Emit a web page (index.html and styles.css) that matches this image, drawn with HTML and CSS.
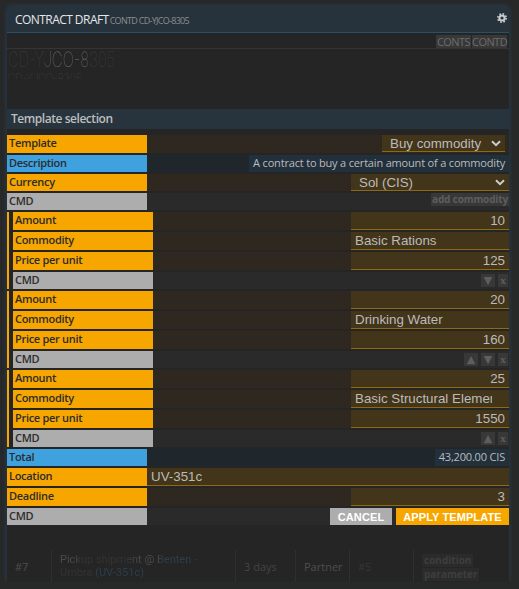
FILE: index.html
```html
<!DOCTYPE html>
<html>
<head>
    <meta charset="UTF-8">
    <meta name="viewport" content="width=device-width, initial-scale=1.0">
    <title>Contract draft</title>
    <link rel="stylesheet" href="styles.css">
</head>
<body>
    <div class="window">
        <div class="title-bar">
            <span class="title">CONTRACT DRAFT</span>
            <span class="subtitle">CONTD CD-YJCO-8305</span>
            <svg class="gear" width="10" height="10" viewBox="0 0 10 10">
                <circle cx="5" cy="5" r="2.6" fill="none" stroke="#ccc" stroke-width="2"></circle>
                <circle cx="5" cy="5" r="4.2" fill="none" stroke="#ccc" stroke-width="1.6" stroke-dasharray="1.7 1.6"></circle>
            </svg>
        </div>
        <div class="cmd-strip">
            <span class="strip-button">CONTS</span>
            <span class="strip-button">CONTD</span>
        </div>
        <div class="hero">
            <div class="hero-big">CD-YJCO-8305</div>
            <div class="hero-small">CD-YJCO-8305</div>
        </div>
        <h2 class="section-title">Template selection</h2>

        <div class="form">
            <div class="row row-input">
                <div class="label label-orange">Template</div>
                <div class="value value-orange">
                    <div class="select select-short">Buy commodity
                        <svg class="chevron" width="10" height="7" viewBox="0 0 10 7"><path d="M1 1.2 5 5.2 9 1.2" fill="none" stroke="#ccc" stroke-width="2"></path></svg>
                    </div>
                </div>
            </div>
            <div class="row row-short">
                <div class="label label-blue">Description</div>
                <div class="value value-blue">
                    <span class="readout">A contract to buy a certain amount of a commodity</span>
                </div>
            </div>
            <div class="row row-short">
                <div class="label label-orange">Currency</div>
                <div class="value value-orange">
                    <div class="select select-wide">Sol (CIS)
                        <svg class="chevron" width="10" height="7" viewBox="0 0 10 7"><path d="M1 1.2 5 5.2 9 1.2" fill="none" stroke="#ccc" stroke-width="2"></path></svg>
                    </div>
                </div>
            </div>
            <div class="row row-short">
                <div class="label label-gray">CMD</div>
                <div class="value value-gray">
                    <span class="small-button add-button">add commodity</span>
                </div>
            </div>

            <div class="commodity">
                <div class="row row-input">
                    <div class="label label-orange">Amount</div>
                    <div class="value value-orange"><input class="field number" value="10"></div>
                </div>
                <div class="row row-input">
                    <div class="label label-orange">Commodity</div>
                    <div class="value value-orange"><input class="field text" value="Basic Rations"></div>
                </div>
                <div class="row row-input">
                    <div class="label label-orange">Price per unit</div>
                    <div class="value value-orange"><input class="field number" value="125"></div>
                </div>
                <div class="row row-short">
                    <div class="label label-gray">CMD</div>
                    <div class="value value-gray value-icons">
                        <span class="small-button icon-button">&#9660;</span>
                        <span class="small-button close-button">x</span>
                    </div>
                </div>
            </div>

            <div class="commodity">
                <div class="row row-input">
                    <div class="label label-orange">Amount</div>
                    <div class="value value-orange"><input class="field number" value="20"></div>
                </div>
                <div class="row row-input">
                    <div class="label label-orange">Commodity</div>
                    <div class="value value-orange"><input class="field text" value="Drinking Water"></div>
                </div>
                <div class="row row-input">
                    <div class="label label-orange">Price per unit</div>
                    <div class="value value-orange"><input class="field number" value="160"></div>
                </div>
                <div class="row row-short">
                    <div class="label label-gray">CMD</div>
                    <div class="value value-gray value-icons">
                        <span class="small-button icon-button">&#9650;</span>
                        <span class="small-button icon-button">&#9660;</span>
                        <span class="small-button close-button">x</span>
                    </div>
                </div>
            </div>

            <div class="commodity">
                <div class="row row-input">
                    <div class="label label-orange">Amount</div>
                    <div class="value value-orange"><input class="field number" value="25"></div>
                </div>
                <div class="row row-input">
                    <div class="label label-orange">Commodity</div>
                    <div class="value value-orange"><input class="field text" value="Basic Structural Elements"></div>
                </div>
                <div class="row row-input">
                    <div class="label label-orange">Price per unit</div>
                    <div class="value value-orange"><input class="field number" value="1550"></div>
                </div>
                <div class="row row-short">
                    <div class="label label-gray">CMD</div>
                    <div class="value value-gray value-icons">
                        <span class="small-button icon-button">&#9650;</span>
                        <span class="small-button close-button">x</span>
                    </div>
                </div>
            </div>

            <div class="row row-short">
                <div class="label label-blue">Total</div>
                <div class="value value-blue">
                    <span class="readout">43,200.00 CIS</span>
                </div>
            </div>
            <div class="row row-input">
                <div class="label label-orange">Location</div>
                <div class="value value-orange"><input class="field text field-full" value="UV-351c"></div>
            </div>
            <div class="row row-input">
                <div class="label label-orange">Deadline</div>
                <div class="value value-orange"><input class="field number" value="3"></div>
            </div>
            <div class="row row-short">
                <div class="label label-gray">CMD</div>
                <div class="value value-gray value-actions">
                    <button class="action cancel">CANCEL</button>
                    <button class="action apply">APPLY TEMPLATE</button>
                </div>
            </div>
        </div>

        <div class="faded-table">
            <div class="cell cell-id">#7</div>
            <div class="cell cell-desc">
                <div class="faded-line line-one">Pickup shipment @ Benten -</div>
                <div class="faded-line line-two">Umbra (UV-351c)</div>
            </div>
            <div class="cell cell-time">3 days</div>
            <div class="cell cell-partner">Partner</div>
            <div class="cell cell-num">#5</div>
            <div class="cell cell-tags">
                <span class="faded-tag">condition</span>
                <span class="faded-tag">parameter</span>
            </div>
        </div>
    </div>
</body>
</html>
```

FILE: styles.css
```css
body {
    margin: 0;
    background-color: #272828;
    font-family: "Open Sans", "Noto Sans", sans-serif;
    font-size: 11px;
}
.window {
    width: 502px;
    height: 576px;
    margin: 6px 0 0 7px;
    background-color: #252525;
    border-radius: 4px 4px 0 0;
    box-shadow: 0 0 5px #26445a;
    overflow: hidden;
    display: flex;
    flex-direction: column;
}
.title-bar {
    position: relative;
    height: 26px;
    padding-left: 8px;
    display: flex;
    align-items: center;
    gap: 1px;
    flex-shrink: 0;
    background-color: #26333c;
    border-bottom: 1px solid #2b4f66;
}
.title {
    font-size: 12px;
    color: #e6e6e6;
    letter-spacing: -0.55px;
}
.subtitle {
    font-size: 9px;
    color: #8c8c8c;
    letter-spacing: -0.7px;
    margin-top: 2px;
}
.gear {
    position: absolute;
    right: 2px;
    top: 7px;
}
.cmd-strip {
    height: 15px;
    display: flex;
    justify-content: flex-end;
    gap: 1px;
    padding-right: 2px;
    flex-shrink: 0;
    border-bottom: 1px solid #353535;
}
.strip-button {
    width: 35px;
    height: 13px;
    margin-top: 2px;
    background-color: #383838;
    color: #6c6c6c;
    font-size: 11px;
    letter-spacing: -0.55px;
    line-height: 13px;
    text-align: center;
}
.hero {
    height: 60px;
    flex-shrink: 0;
}
.hero-big {
    width: 160px;
    padding-left: 1px;
    font-family: "Inter", sans-serif;
    font-weight: 100;
    font-size: 21px;
    line-height: 22px;
    background: linear-gradient(to right, #3e3e3e 0, #3e3e3e 48px, #7a7a7a 56px, #7a7a7a 108px, #3e3e3e 122px);
    -webkit-background-clip: text;
    background-clip: text;
    color: transparent;
    transform: scaleX(0.71);
    transform-origin: left;
}
.hero-small {
    width: 130px;
    height: 15px;
    padding-left: 1px;
    font-family: "Inter", sans-serif;
    font-weight: 100;
    font-size: 14.5px;
    line-height: 15px;
    background: linear-gradient(to bottom, #4c4c4c 0, #4c4c4c 8px, transparent 8px);
    -webkit-background-clip: text;
    background-clip: text;
    color: transparent;
    transform: scaleX(0.71);
    transform-origin: left;
}
.section-title {
    height: 20px;
    margin: 0;
    padding-left: 4px;
    flex-shrink: 0;
    background-color: #27343e;
    color: #bdbdbd;
    font-size: 12px;
    font-weight: 600;
    letter-spacing: -0.45px;
    line-height: 19px;
}
.form {
    margin-top: 6px;
    display: flex;
    flex-direction: column;
    gap: 2px;
    flex-shrink: 0;
}
.commodity {
    display: flex;
    flex-direction: column;
    gap: 2px;
    padding-left: 4px;
    border-left: 2px solid #f7a600;
}
.row {
    display: flex;
}
.row-input {
    height: 18px;
}
.row-short {
    height: 17px;
}
.label {
    width: 140px;
    padding-left: 2px;
    box-sizing: border-box;
    flex-shrink: 0;
    color: #2c2c2c;
    font-weight: 600;
    letter-spacing: -0.3px;
    line-height: 15px;
}
.label-orange {
    background-color: #f7a600;
}
.label-blue {
    background-color: #3fa2de;
}
.label-gray {
    background-color: #adadad;
}
.value {
    flex: 1;
    display: flex;
    justify-content: flex-end;
    align-items: flex-start;
}
.value-orange {
    background-color: #2e2820;
}
.value-blue {
    background-color: #20272c;
}
.value-gray {
    background-color: #2a2a2a;
}
.value-icons {
    gap: 3px;
    padding: 2px 1px 0 0;
}
.value-actions {
    gap: 4px;
}
.select {
    position: relative;
    height: 17px;
    padding-left: 8px;
    box-sizing: border-box;
    background-color: #433519;
    border-bottom: 1px solid #8e6a14;
    color: #bbb;
    font-family: "Liberation Sans", Arial, sans-serif;
    font-size: 13.33px;
    line-height: 17px;
}
.select-short {
    width: 123px;
    margin-right: 4px;
}
.select-wide {
    width: 158px;
}
.chevron {
    position: absolute;
    right: 4px;
    top: 5px;
}
.field {
    width: 158px;
    height: 18px;
    box-sizing: border-box;
    padding: 0 17px 0 4px;
    border: none;
    border-bottom: 1px solid #8e6a14;
    outline: none;
    background-color: #433519;
    color: #bbb;
    font-family: "Liberation Sans", Arial, sans-serif;
    font-size: 13.33px;
}
.field.number {
    padding: 0 4px;
    text-align: right;
}
.field-full {
    width: 100%;
}
.readout {
    height: 17px;
    padding: 0 4px;
    background-color: #22303c;
    color: #bbb;
    font-size: 11px;
    letter-spacing: -0.18px;
    line-height: 15px;
}
.small-button {
    background-color: #383838;
    color: #5e5e5e;
    text-align: center;
}
.add-button {
    height: 13px;
    width: 78px;
    font-size: 10px;
    font-weight: 700;
    letter-spacing: -0.15px;
    line-height: 13px;
}
.icon-button {
    width: 14px;
    height: 13px;
    font-family: "DejaVu Sans", sans-serif;
    font-size: 11px;
    line-height: 13px;
}
.close-button {
    width: 10px;
    height: 13px;
    font-family: "Liberation Serif", serif;
    font-size: 11px;
    font-weight: 700;
    line-height: 13px;
}
.action {
    height: 17px;
    padding: 0;
    border: none;
    color: #fff;
    font-family: "Liberation Sans", Arial, sans-serif;
    font-size: 11px;
    font-weight: 700;
    letter-spacing: 0.1px;
}
.cancel {
    width: 62px;
    background-color: #adadad;
}
.apply {
    width: 113px;
    background-color: #f7a600;
}
.faded-table {
    margin-top: 25px;
    height: 32px;
    display: flex;
    flex-shrink: 0;
    color: #444;
    font-size: 11px;
}
.cell {
    box-sizing: border-box;
    border-right: 1px solid #2c3034;
    padding: 0 8px;
    line-height: 13px;
    display: flex;
    align-items: center;
}
.cell-id {
    width: 45px;
    color: #4e4e4e;
}
.cell-desc {
    width: 184px;
    display: block;
    padding-top: 3px;
}
.faded-line {
    font-family: "Roboto", sans-serif;
    -webkit-background-clip: text;
    background-clip: text;
    color: transparent;
}
.line-one {
    background-image: linear-gradient(to right, #4c4c4c 0, #4c4c4c 12px, #333 22px, #333 68px, #4c4c4c 78px, #4c4c4c 98px, #2c3e4d 100px, #2c3e4d 130px, #333 136px);
}
.line-two {
    background-image: linear-gradient(to right, #333 0, #333 34px, #2c3e4d 36px);
}
.cell-time {
    width: 60px;
}
.cell-partner {
    width: 54px;
    color: #4e4e4e;
}
.cell-num {
    width: 64px;
    color: #363636;
}
.cell-tags {
    border: none;
    display: block;
    padding: 4px 0 0 8px;
}
.faded-tag {
    display: block;
    width: fit-content;
    margin-bottom: 1px;
    padding: 0 2px;
    background-color: #2b2b2b;
    color: #3e3e3e;
    font-weight: 700;
    font-size: 10px;
}
```
